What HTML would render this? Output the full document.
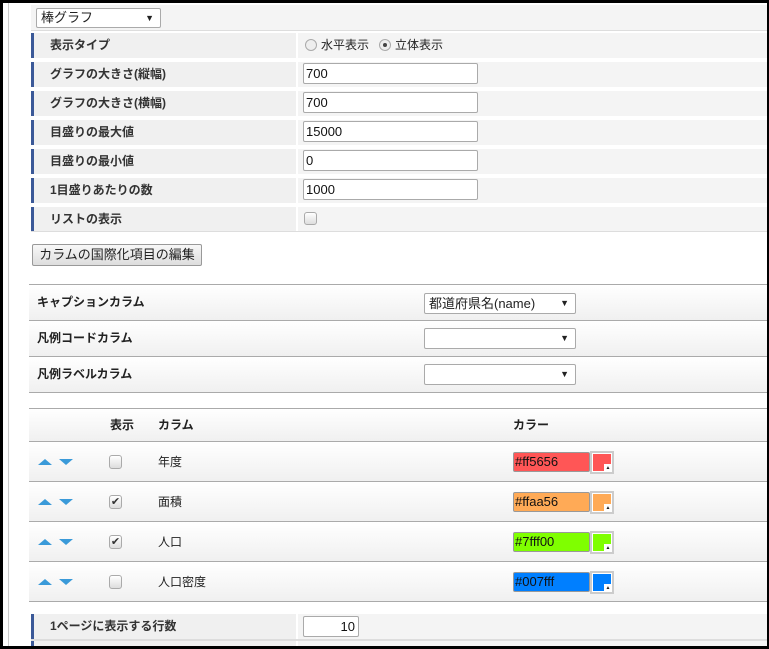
<!DOCTYPE html>
<html><head><meta charset="utf-8"><style>
*{box-sizing:border-box;margin:0;padding:0}
body{width:769px;height:649px;overflow:hidden;background:#000;position:relative;font-family:"Liberation Sans","Noto Sans CJK JP",sans-serif;font-size:12px;color:#222}
.pg{position:absolute;left:3px;top:3px;width:764px;height:643px;background:#fff;overflow:hidden}
.a{position:absolute}
.lab{position:absolute;left:28px;width:265px;height:25px;background:#f0f0f0;border-left:3px solid #3b5998;padding-left:16px;line-height:25px;font-weight:bold;color:#333;font-size:12px}
.val{position:absolute;left:295px;width:472px;height:25px;background:#f4f4f4}
.inp{position:absolute;left:300px;width:175px;height:21px;border:1px solid #aaa;border-radius:2px;background:#fff;font-size:13px;line-height:19px;padding-left:2px;color:#111}
.sec{position:absolute;left:26px;width:741px;height:36px;background:linear-gradient(#fff,#f0f0f0);border-bottom:1px solid #aaa;font-weight:bold;font-size:12px;line-height:35px;padding-left:8px}
.sel{position:absolute;left:421px;width:152px;height:21px;border:1px solid #aaa;border-radius:2px;background:#fff;font-size:13px;line-height:19px;padding-left:4px;font-weight:normal}
.sel:after{content:"▼";position:absolute;right:6px;top:0;font-size:9px}
.tr{position:absolute;left:26px;width:741px;height:40px;background:linear-gradient(#fff,#f0f0f0);border-bottom:1px solid #aaa}
.up{position:absolute;left:9px;top:17px;width:0;height:0;border-left:7px solid transparent;border-right:7px solid transparent;border-bottom:6px solid #3a9ad9}
.dn{position:absolute;left:30px;top:17px;width:0;height:0;border-left:7px solid transparent;border-right:7px solid transparent;border-top:6px solid #3a9ad9}
.cb{position:absolute;left:80px;top:13px;width:13px;height:14px;border:1px solid #aaa;border-radius:3px;background:linear-gradient(#fff,#ddd);font-size:11px;line-height:12px;text-align:center;color:#333}
.nm{position:absolute;left:129px;top:0;line-height:40px;font-size:12px}
.ci{position:absolute;left:484px;top:10px;width:77px;height:20px;border:1px solid #999;border-radius:2px;font-size:13px;line-height:18px;padding-left:1px;color:#111}
.sw{position:absolute;left:561px;top:9px;width:24px;height:23px;border:2px solid #ccc;background:#fff;padding:1px}
.sw i{display:block;width:18px;height:17px}
.sw b{position:absolute;right:0;bottom:0;width:8px;height:8px;background:#fff;font-size:5px;line-height:9px;text-align:center}
</style></head><body><div class="pg">
<div class="a" style="left:5px;top:0;width:1px;height:643px;background:#ccc"></div>
<div class="a" style="left:28px;top:2px;width:739px;height:26px;background:#f4f4f4;border-bottom:1px solid #ddd"></div>
<div class="a" style="left:33px;top:5px;width:125px;height:20px;border:1px solid #aaa;border-radius:2px;background:#fff;font-size:13px;line-height:18px;padding-left:4px">棒グラフ<span style="position:absolute;right:6px;font-size:9px">▼</span></div>

<div class="lab" style="top:30px">表示タイプ</div><div class="val" style="top:30px"></div>
<div class="a" style="left:302px;top:36px;width:12px;height:12px;border:1px solid #aaa;border-radius:50%;background:#eee"></div>
<div class="a" style="left:318px;top:30px;line-height:25px;font-size:12px">水平表示</div>
<div class="a" style="left:376px;top:36px;width:12px;height:12px;border:1px solid #aaa;border-radius:50%;background:#eee"><div style="margin:3px;width:4px;height:4px;border-radius:50%;background:#444"></div></div>
<div class="a" style="left:392px;top:30px;line-height:25px;font-size:12px">立体表示</div>

<div class="lab" style="top:59px">グラフの大きさ(縦幅)</div><div class="val" style="top:59px"></div><div class="inp" style="top:60px">700</div>
<div class="lab" style="top:88px">グラフの大きさ(横幅)</div><div class="val" style="top:88px"></div><div class="inp" style="top:89px">700</div>
<div class="lab" style="top:117px">目盛りの最大値</div><div class="val" style="top:117px"></div><div class="inp" style="top:118px">15000</div>
<div class="lab" style="top:146px">目盛りの最小値</div><div class="val" style="top:146px"></div><div class="inp" style="top:147px">0</div>
<div class="lab" style="top:175px">1目盛りあたりの数</div><div class="val" style="top:175px"></div><div class="inp" style="top:176px">1000</div>
<div class="lab" style="top:204px">リストの表示</div><div class="val" style="top:204px"></div>
<div class="a" style="left:301px;top:209px;width:13px;height:13px;border:1px solid #aaa;border-radius:3px;background:linear-gradient(#fff,#ddd)"></div>
<div class="a" style="left:28px;top:228px;width:739px;height:1px;background:#ddd"></div>

<div class="a" style="left:29px;top:241px;width:170px;height:22px;border:1px solid #999;border-radius:2px;background:linear-gradient(#f8f8f8,#ddd);font-size:13px;line-height:20px;text-align:center">カラムの国際化項目の編集</div>

<div class="a" style="left:26px;top:281px;width:741px;height:1px;background:#aaa"></div>
<div class="sec" style="top:282px">キャプションカラム<div class="sel" style="top:8px;left:395px">都道府県名(name)</div></div>
<div class="sec" style="top:318px">凡例コードカラム<div class="sel" style="top:7px;left:395px"></div></div>
<div class="sec" style="top:354px">凡例ラベルカラム<div class="sel" style="top:7px;left:395px"></div></div>

<div class="a" style="left:26px;top:405px;width:741px;height:1px;background:#aaa"></div>
<div class="tr" style="top:406px;height:33px"><div class="a" style="left:81px;line-height:33px;font-weight:bold">表示</div><div class="a" style="left:129px;line-height:33px;font-weight:bold">カラム</div><div class="a" style="left:484px;line-height:33px;font-weight:bold">カラー</div></div>

<div class="tr" style="top:439px"><div class="up"></div><div class="dn"></div><div class="cb"></div><div class="nm">年度</div><div class="ci" style="background:#ff5656">#ff5656</div><div class="sw"><i style="background:#ff5656"></i><b>▲</b></div></div>
<div class="tr" style="top:479px"><div class="up"></div><div class="dn"></div><div class="cb">✔</div><div class="nm">面積</div><div class="ci" style="background:#ffaa56">#ffaa56</div><div class="sw"><i style="background:#ffaa56"></i><b>▲</b></div></div>
<div class="tr" style="top:519px"><div class="up"></div><div class="dn"></div><div class="cb">✔</div><div class="nm">人口</div><div class="ci" style="background:#7fff00">#7fff00</div><div class="sw"><i style="background:#7fff00"></i><b>▲</b></div></div>
<div class="tr" style="top:559px"><div class="up"></div><div class="dn"></div><div class="cb"></div><div class="nm">人口密度</div><div class="ci" style="background:#007fff">#007fff</div><div class="sw"><i style="background:#007fff"></i><b>▲</b></div></div>

<div class="lab" style="top:611px">1ページに表示する行数</div><div class="val" style="top:611px"></div>
<div class="inp" style="top:613px;width:56px;text-align:right;padding-right:3px">10</div>
<div class="a" style="left:28px;top:636px;width:739px;height:2px;background:#ddd"></div>
<div class="lab" style="top:638px"></div><div class="val" style="top:638px"></div>
</div></body></html>
